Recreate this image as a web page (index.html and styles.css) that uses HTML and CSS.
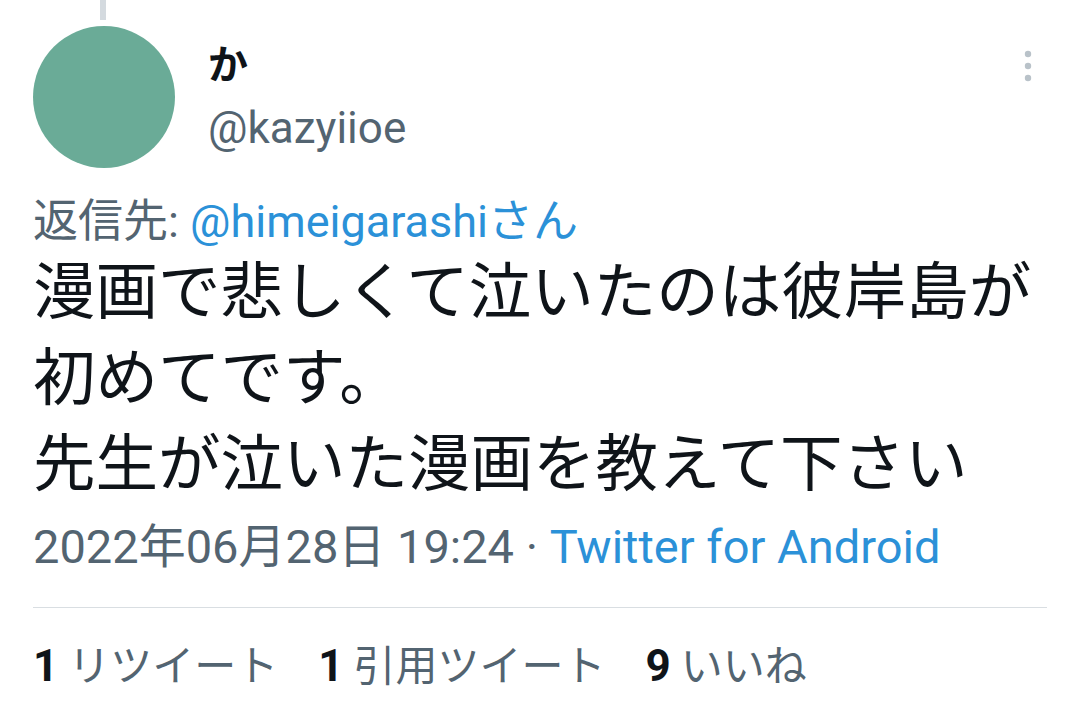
FILE: index.html
```html
<!DOCTYPE html>
<html lang="ja">
<head>
  <meta charset="UTF-8" />
  <meta name="viewport" content="width=device-width, initial-scale=1.0" />
  <title>Tweet</title>
  <link rel="stylesheet" href="styles.css">
</head>
<body>

  <article class="tweet">
    <!-- thread line from the parent tweet -->
    <div class="thread-line"></div>

    <header class="tweet-head">
      <div class="avatar"></div>
      <div class="author">
        <div class="author-name">か</div>
        <div class="author-handle">@kazyiioe</div>
      </div>
      <button class="more" aria-label="More">
        <svg viewBox="0 0 10 32" width="10" height="32">
          <circle cx="5" cy="4" r="3.2" />
          <circle cx="5" cy="16" r="3.2" />
          <circle cx="5" cy="28" r="3.2" />
        </svg>
      </button>
    </header>

    <p class="reply-to">返信先: <a href="#">@himeigarashiさん</a></p>

    <p class="tweet-text">漫画で悲しくて泣いたのは彼岸島が<br>初めてです。<br>先生が泣いた漫画を教えて下さい</p>

    <p class="tweet-meta">2022年06月28日 19:24 · <a href="#">Twitter for Android</a></p>

    <div class="tweet-stats">
      <span class="stat"><b>1</b>リツイート</span>
      <span class="stat"><b>1</b>引用ツイート</span>
      <span class="stat"><b>9</b>いいね</span>
    </div>
  </article>

</body>
</html>
```

FILE: styles.css
```css
* {
  box-sizing: border-box;
}

body {
  margin: 0;
  background-color: #fff;
  color: #0f1419;
  font-family: Roboto, "Noto Sans CJK JP", sans-serif;
}

a {
  color: #2b91d8;
  text-decoration: none;
}

.tweet {
  padding: 0 32px 0 33px;
}

.thread-line {
  width: 6px;
  height: 20px;
  margin-left: 67px;
  background-color: #d4dadf;
}

.tweet-head {
  display: flex;
  align-items: flex-start;
  margin-top: 6px;
}

.avatar {
  width: 142px;
  height: 142px;
  flex-shrink: 0;
  border-radius: 50%;
  background-color: #6aab97;
}

.author {
  flex: 1;
  margin-left: 33px;
  padding-top: 16px;
}

.author-name {
  font-size: 40px;
  font-weight: 700;
  line-height: 48px;
}

.author-handle {
  margin-top: 12px;
  font-size: 44px;
  line-height: 52px;
  color: #536471;
}

.more {
  margin: 24px 14px 0 0;
  padding: 0;
  border: none;
  background: none;
  fill: #b9c2c9;
}

.reply-to {
  margin: 26px 0 0;
  font-size: 45px;
  line-height: 56px;
  color: #536471;
}

.tweet-text {
  margin: 0;
  font-size: 62.5px;
  line-height: 86px;
}

.tweet-meta {
  margin: 11px 0 0;
  padding-bottom: 32px;
  border-bottom: 1px solid #d9dee2;
  font-size: 47px;
  line-height: 56px;
  color: #536471;
}

.tweet-stats {
  display: flex;
  gap: 40px;
  padding-top: 30px;
  font-size: 42px;
  line-height: 56px;
  color: #536471;
}

.stat b {
  margin-right: 10px;
  font-size: 44px;
  color: #0f1419;
}
```
